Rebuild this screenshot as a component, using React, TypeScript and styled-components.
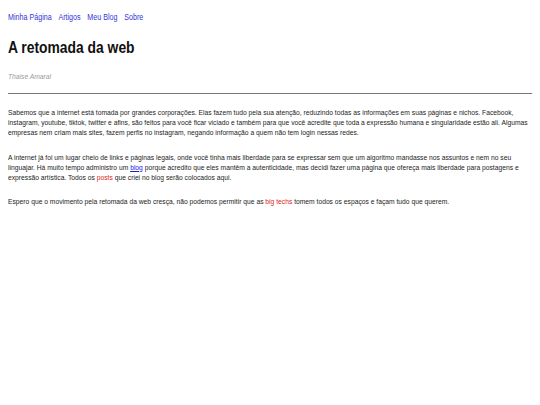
import React from "react";
import styled, { createGlobalStyle } from "styled-components";

const NARROW = 0.84;

const GlobalStyle = createGlobalStyle`
  html, body {
    margin: 0;
    background: #fff;
  }
  body {
    padding: 8px;
    overflow: hidden;
    font-family: "Liberation Sans", Arial, sans-serif;
    color: #1c1c1c;
  }
`;

// the original uses a narrow face (Arial Narrow); squeeze Liberation Sans to match
const Page = styled.main`
  width: calc(524px / ${NARROW});
  transform: scaleX(${NARROW});
  transform-origin: left top;
`;

const Nav = styled.nav`
  display: flex;
  gap: 8px;
  padding-top: 4px;
  font-size: 8.5px;
  line-height: 10px;
`;

const NavLink = styled.a`
  color: #3434d6;
  text-decoration: none;
`;

const Title = styled.h1`
  margin: 16px 0 0;
  font-size: 16.5px;
  line-height: 19px;
  font-weight: bold;
  color: #111;
`;

const Author = styled.p`
  margin: 15px 0 0;
  font-size: 8px;
  line-height: 9px;
  font-style: italic;
  color: #9a9a9a;
`;

const Rule = styled.hr`
  margin: 12px 0 0;
  border: none;
  border-top: 1px solid #777;
`;

const Paragraph = styled.p`
  margin: 14px 0 0;
  font-size: 8px;
  line-height: 10.2px;

  &:first-of-type {
    margin-top: 11px;
  }
`;

const Link = styled.a`
  color: #1a1ae0;
  text-decoration: underline;
`;

const Red = styled.span`
  color: #e02424;
`;

const App: React.FC = () => {
    return (
        <>
            <GlobalStyle />
            <Page>
                <Nav>
                    <NavLink href="#">Minha Página</NavLink>
                    <NavLink href="#">Artigos</NavLink>
                    <NavLink href="#">Meu Blog</NavLink>
                    <NavLink href="#">Sobre</NavLink>
                </Nav>
                <Title>A retomada da web</Title>
                <Author>Thaise Amaral</Author>
                <Rule />
                <Paragraph>
                    Sabemos que a internet está tomada por grandes corporações. Elas fazem tudo pela sua atenção, reduzindo todas as informações em suas páginas e nichos. Facebook, instagram, youtube, tiktok, twitter e afins, são feitos para você ficar viciado e também para que você acredite que toda a expressão humana e singularidade estão ali. Algumas empresas nem criam mais sites, fazem perfis no instagram, negando informação a quem não tem login nessas redes.
                </Paragraph>
                <Paragraph>
                    A internet já foi um lugar cheio de links e páginas legais, onde você tinha mais liberdade para se expressar sem que um algoritmo mandasse nos assuntos e nem no seu linguajar. Há muito tempo administro um <Link href="#">blog</Link> porque acredito que eles mantêm a autenticidade, mas decidi fazer uma página que ofereça mais liberdade para postagens e expressão artística. Todos os <Red>posts</Red> que criei no blog serão colocados aqui.
                </Paragraph>
                <Paragraph>
                    Espero que o movimento pela retomada da web cresça, não podemos permitir que as <Red>big techs</Red> tomem todos os espaços e façam tudo que querem.
                </Paragraph>
            </Page>
        </>
    );
};
export default App;
